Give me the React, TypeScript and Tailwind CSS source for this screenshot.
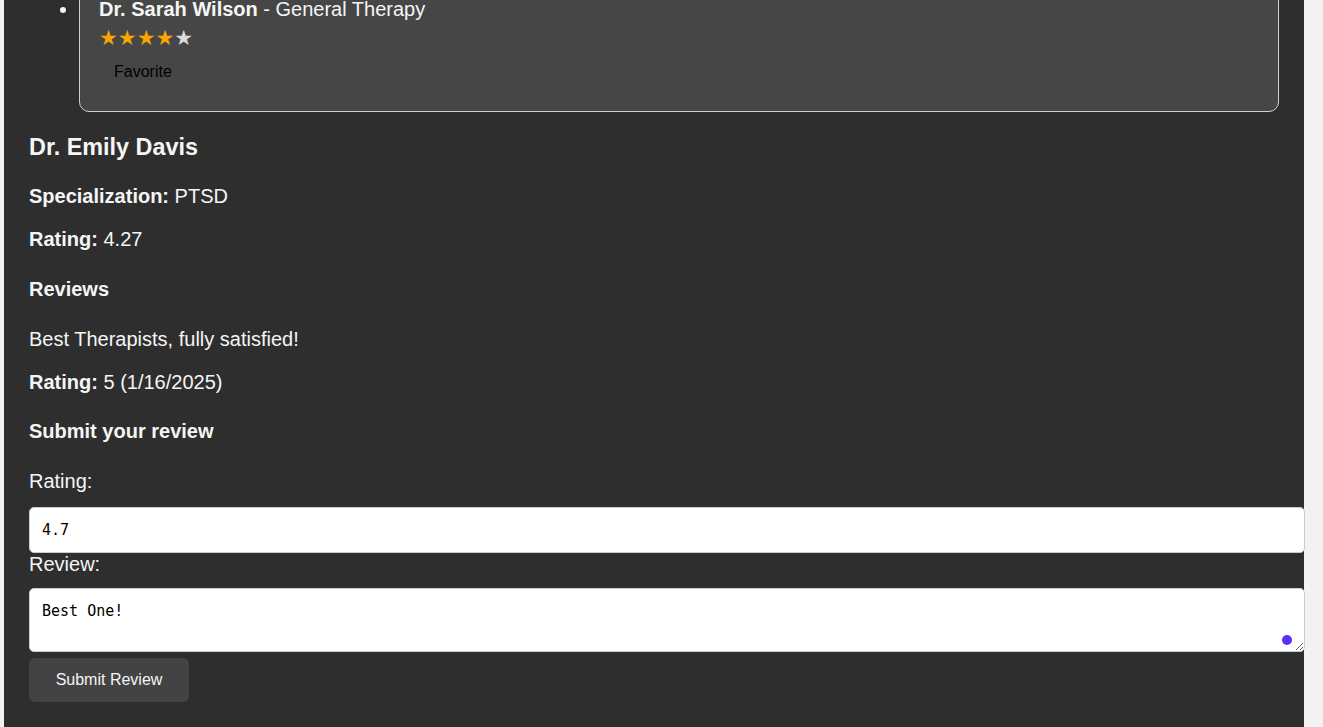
import React from 'react'

const review = {
  text: 'Best Therapists, fully satisfied!',
  rating: 5,
  date: '1/16/2025',
}

function Stars({ value }: { value: number }) {
  return (
    <div className="mt-[6px] text-[21px] leading-[23px] font-['DejaVu_Sans',sans-serif]">
      {[1, 2, 3, 4, 5].map((n) => (
        <span key={n} className={n <= value ? 'text-[#f7a500]' : 'text-[#dcdcdc]'}>
          ★
        </span>
      ))}
    </div>
  )
}

export default function App() {
  return (
    <div className="h-[727px] overflow-hidden bg-[#f2f2f2] pl-[4px] font-['Liberation_Sans',Arial,sans-serif]">
      <div className="flow-root w-[1300px] h-[727px] bg-[#2e2e2e] px-[25px] text-[#f5f5f5] text-[20px] leading-[23px]">
        {/* favourites list, scrolled part way */}
        <ul className="-mt-[23px] list-disc pl-[50px] mb-[22.4px]">
          <li className="rounded-[10px] border border-[#cfcfcf] bg-[#464646] px-[19px] pt-[20px] pb-[20px]">
            <div>
              <strong>Dr. Sarah Wilson</strong> - General Therapy
            </div>
            <Stars value={4} />
            <button className="mt-[3px] block px-[15px] py-[10px] text-[16px] leading-[18px] text-black bg-transparent">
              Favorite
            </button>
          </li>
        </ul>

        <h3 className="text-[23.4px] leading-[27px] font-bold mt-[22px] mb-[24px]">Dr. Emily Davis</h3>
        <p className="my-[20px]">
          <strong>Specialization:</strong> PTSD
        </p>
        <p className="my-[20px]">
          <strong>Rating:</strong> 4.27
        </p>

        <h4 className="font-bold my-[26.6px]">Reviews</h4>
        <p className="my-[20px]">{review.text}</p>
        <p className="my-[20px]">
          <strong>Rating:</strong> {review.rating} ({review.date})
        </p>

        <h4 className="font-bold mt-[26.6px] mb-[26.6px]">Submit your review</h4>
        <form onSubmit={(e) => e.preventDefault()}>
          <label className="block">Rating:</label>
          <input
            defaultValue="4.7"
            className="mt-[14px] block w-[1276px] h-[46px] px-[12px] rounded-[5px] border border-[#cccccc] bg-white text-black text-[15px] font-['DejaVu_Sans_Mono',monospace] outline-none"
          />
          <label className="block">Review:</label>
          <div className="relative mt-[12px] w-[1276px]">
            <textarea
              defaultValue="Best One!"
              className="block w-[1276px] h-[64px] px-[12px] pt-[13px] pb-[11px] rounded-[5px] border border-[#cccccc] bg-white text-black text-[15px] leading-[18px] font-['DejaVu_Sans_Mono',monospace] outline-none"
            />
            <span className="absolute right-[13px] bottom-[7px] w-[10px] h-[10px] rounded-full bg-[#5b2ff5]" />
          </div>
          <button
            type="submit"
            className="mt-[6px] w-[160px] h-[44px] rounded-[6px] bg-[#434343] text-[16px] text-[#f5f5f5]"
          >
            Submit Review
          </button>
        </form>
      </div>
    </div>
  )
}
